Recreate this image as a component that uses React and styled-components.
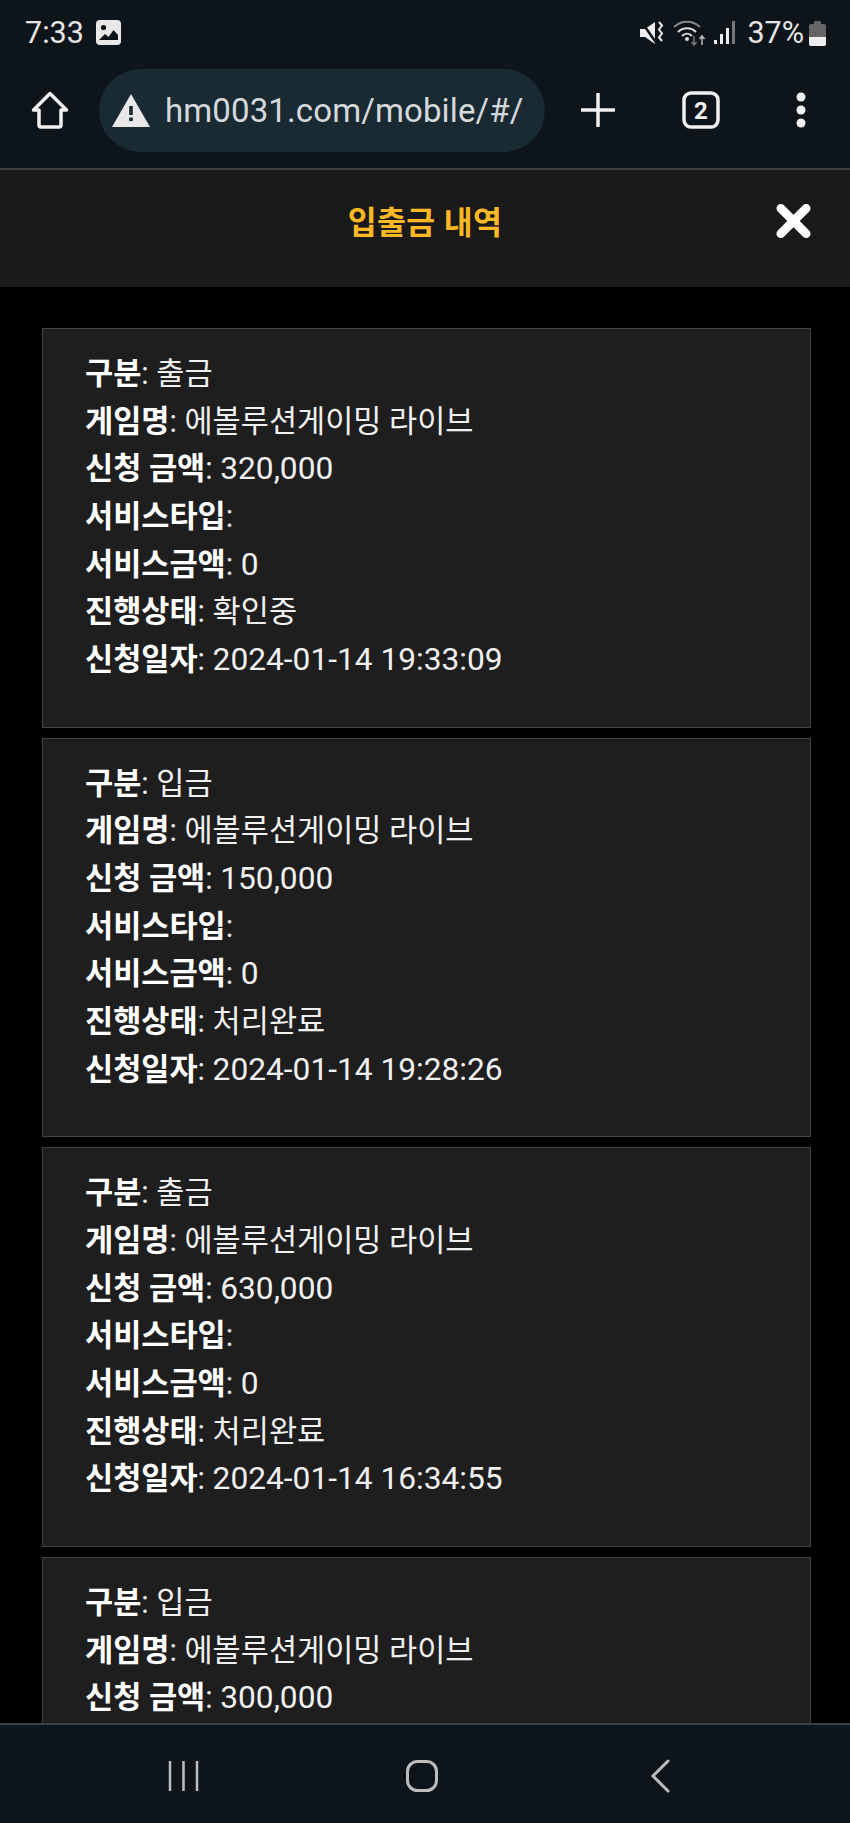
import React from "react";
import styled, { createGlobalStyle } from "styled-components";

const Global = createGlobalStyle`
  html, body { margin: 0; padding: 0; background: #000; }
  * { box-sizing: border-box; }
`;
const Phone = styled.div`
  width: 850px; height: 1823px; display: flex; flex-direction: column; overflow: hidden;
  background: #000; font-family: Roboto, "Noto Sans CJK KR", sans-serif; color: #fff;
`;
const StatusBar = styled.div`
  height: 69px; flex: none; background: #0d141a; display: flex; align-items: center;
  justify-content: space-between; padding: 0 24px 4px 25px; color: #e6e6e6; font-size: 30.5px;
`;
const StatusSide = styled.div`display: flex; align-items: center; gap: ${p => p.$gap}px;`;
const Toolbar = styled.div`
  height: 101px; flex: none; background: #0d141a; border-bottom: 2px solid #3a4046;
  display: flex; align-items: flex-start; padding: 0 0 0 31px; color: #e6e6e6;
`;
const ToolIcon = styled.svg`flex: none; margin-top: ${p => p.$top || 22}px; margin-left: ${p => p.$left || 0}px;`;
const UrlPill = styled.div`
  width: 446px; height: 83px; margin-left: 30px; border-radius: 42px; background: #1a2a33; flex: none;
  display: flex; align-items: center; padding-left: 13px; gap: 15px; font-size: 33px; color: #d5d9dc;
  letter-spacing: 0.12px; white-space: nowrap;
`;
const Header = styled.div`
  height: 117px; flex: none; background: #1a1a1a; position: relative; display: flex; justify-content: center;
  padding: 32px 0 0 0;
`;
const Title = styled.div`
  font-size: 31.4px; font-weight: 700; color: #fdb924; line-height: 44px; letter-spacing: 0.4px;
`;
const Close = styled.svg`position: absolute; left: 776px; top: 33px;`;
const List = styled.div`
  flex: 1; min-height: 0; overflow: hidden; padding: 41px 39px 0 42px; display: flex; flex-direction: column; gap: 10px;
`;
const Card = styled.div`
  flex: ${p => (p.$cut ? "1" : "none")}; background: #1e1e1e; border: 1px solid #444;
  border-bottom-width: ${p => (p.$cut ? 0 : 1)}px; padding: 21px 42px 43px;
  font-size: 30.6px; line-height: 47.68px; color: #f0f0f0;
`;
const Row = styled.div`white-space: nowrap; height: 47.68px;`;
const Label = styled.b`font-weight: 700; color: #fff;`;
const Num = styled.span`font-size: 31.7px;`;
const NavBar = styled.div`
  height: 100px; flex: none; background: #0d141a; border-top: 2px solid #3a4046; display: flex; align-items: flex-start;
  padding-top: 34px; padding-left: 167px;
`;
const NavIcon = styled.svg`flex: none; margin-left: ${p => p.$left || 0}px;`;

const records = [
  { id: 1, kind: "출금", amount: "320,000", state: "확인중", date: "2024-01-14 19:33:09" },
  { id: 2, kind: "입금", amount: "150,000", state: "처리완료", date: "2024-01-14 19:28:26" },
  { id: 3, kind: "출금", amount: "630,000", state: "처리완료", date: "2024-01-14 16:34:55" },
  { id: 4, kind: "입금", amount: "300,000" },
];

export default function App() {
  return (
    <Phone>
      <Global />
      <StatusBar>
        <StatusSide $gap={12}>
          <span>7:33</span>
          <svg width="25" height="25" viewBox="0 0 25 25">
            <rect width="25" height="25" rx="4" fill="#e8e8e8" />
            <circle cx="7.5" cy="7.5" r="2.6" fill="#0d141a" />
            <path d="M3 20l6-6 3.5 3 5-7L22 15v5z" fill="#0d141a" />
          </svg>
        </StatusSide>
        <StatusSide $gap={0}>
          <svg width="24" height="24" viewBox="0 0 24 24" style={{ marginRight: 9 }}>
            <path d="M0 8h5l10-7v22L5 16H0z" fill="#eee" />
            <path d="M1 0l16 23" stroke="#0d141a" strokeWidth="2.5" />
            <path d="M19 1l3 3.500-3 4 3 4-3 4 3 3.500" stroke="#eee" strokeWidth="2" fill="none" />
          </svg>
          <svg width="34" height="26" viewBox="0 0 34 26" style={{ marginRight: 7 }}>
            <path d="M1 7c8-7 18-7 26 0" stroke="#888" strokeWidth="2" fill="none" />
            <path d="M5 12c5-5 13-5 18 0M9 16c3-3 7-3 10 0" stroke="#ddd" strokeWidth="2" fill="none" />
            <circle cx="14" cy="19" r="2" fill="#ddd" />
            <path d="M21 16v9M18.500 22l2.500 3 2.500-3" stroke="#777" strokeWidth="1.500" fill="none" />
            <path d="M29 25v-9M26.500 19l2.500-3 2.500 3" stroke="#bbb" strokeWidth="1.500" fill="none" />
          </svg>
          <svg width="22" height="24" viewBox="0 0 22 24" style={{ marginRight: 11 }}>
            <rect x="0" y="19" width="3" height="4" fill="#eee" />
            <rect x="6" y="13" width="3" height="10" fill="#eee" />
            <rect x="12" y="7" width="3" height="16" fill="#eee" />
            <rect x="18" y="0" width="3" height="23" fill="#777" />
          </svg>
          <span>37%</span>
          <svg width="17" height="26" viewBox="0 0 17 26" style={{ marginLeft: 5 }}>
            <path d="M5 2a1 1 0 0 1 1-1h5a1 1 0 0 1 1 1v2h3a2 2 0 0 1 2 2v18a2 2 0 0 1-2 2H2a2 2 0 0 1-2-2V6a2 2 0 0 1 2-2h3z" fill="#666" />
            <path d="M0 17h17v7a2 2 0 0 1-2 2H2a2 2 0 0 1-2-2z" fill="#eee" />
          </svg>
        </StatusSide>
      </StatusBar>
      <Toolbar>
        <ToolIcon width="38" height="38" viewBox="0 0 38 38" $top={22}>
          <path d="M19 2.500L2.500 19H8v15a2 2 0 0 0 2 2h18a2 2 0 0 0 2-2V19h5.500z" fill="none" stroke="#f0f0f0" strokeWidth="3.500" strokeLinejoin="round" />
        </ToolIcon>
        <UrlPill>
          <svg width="38" height="33" viewBox="0 0 38 33">
            <path d="M19 0L38 33H0z" fill="#e8e8e8" />
            <rect x="17.200" y="12" width="3.600" height="9" fill="#1a2a33" />
            <rect x="17.200" y="23.500" width="3.600" height="3.600" fill="#1a2a33" />
          </svg>
          <span>hm0031.com/mobile/#/</span>
        </UrlPill>
        <ToolIcon width="34" height="34" viewBox="0 0 34 34" $top={24} $left={36}>
          <path d="M17 1v32M1 17h32" stroke="#f0f0f0" strokeWidth="3.500" strokeLinecap="round" />
        </ToolIcon>
        <ToolIcon width="38" height="38" viewBox="0 0 38 38" $top={22} $left={67}>
          <rect x="2" y="2" width="34" height="34" rx="7" fill="none" stroke="#f0f0f0" strokeWidth="3.500" />
          <text x="19" y="27.500" textAnchor="middle" fontSize="24" fontWeight="700" fontFamily="Roboto" fill="#f0f0f0">2</text>
        </ToolIcon>
        <ToolIcon width="12" height="36" viewBox="0 0 12 36" $top={23} $left={75}>
          <circle cx="6" cy="5" r="4.500" fill="#f0f0f0" />
          <circle cx="6" cy="18" r="4.500" fill="#f0f0f0" />
          <circle cx="6" cy="31" r="4.500" fill="#f0f0f0" />
        </ToolIcon>
      </Toolbar>
      <Header>
        <Title>입출금 내역</Title>
        <Close width="35" height="36" viewBox="0 0 36 36">
          <path d="M5 5l26 26M31 5L5 31" stroke="#fff" strokeWidth="9" strokeLinecap="round" />
        </Close>
      </Header>
      <List>
        {records.map((r) => (
          <Card key={r.id} $cut={!r.date}>
            <Row><Label>구분</Label>: {r.kind}</Row>
            <Row><Label>게임명</Label>: 에볼루션게이밍 라이브</Row>
            <Row><Label>신청 금액</Label>: <Num>{r.amount}</Num></Row>
            {r.date && (
              <>
                <Row><Label>서비스타입</Label>:</Row>
                <Row><Label>서비스금액</Label>: <Num>0</Num></Row>
                <Row><Label>진행상태</Label>: {r.state}</Row>
                <Row><Label>신청일자</Label>: <Num>{r.date}</Num></Row>
              </>
            )}
          </Card>
        ))}
      </List>
      <NavBar>
        <NavIcon width="34" height="34" viewBox="0 0 34 34">
          <path d="M3 2v30M16.500 2v30M30 2v30" stroke="#bdbdbd" strokeWidth="2.500" />
        </NavIcon>
        <NavIcon width="34" height="34" viewBox="0 0 34 34" $left={204}>
          <rect x="2.500" y="2.500" width="29" height="29" rx="10" fill="none" stroke="#bdbdbd" strokeWidth="3" />
        </NavIcon>
        <NavIcon width="22" height="34" viewBox="0 0 22 34" $left={210}>
          <path d="M19 2L4 17l15 15" fill="none" stroke="#bdbdbd" strokeWidth="3" strokeLinecap="round" />
        </NavIcon>
      </NavBar>
    </Phone>
  );
}
